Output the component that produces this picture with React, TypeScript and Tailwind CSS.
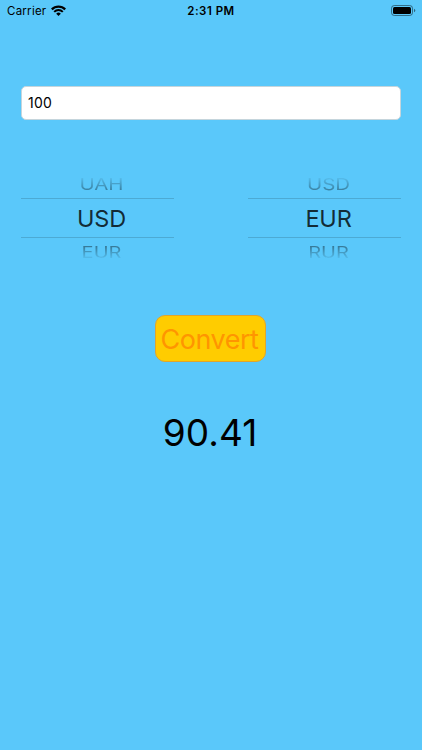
import { useState } from 'react';

interface PickerProps {
  previous: string;
  selected: string;
  next: string;
}

function StatusBar() {
  return (
    <div className="relative flex h-[22px] items-center justify-between pl-[7px] pr-[6px] text-[11.5px] leading-none">
      <div className="flex items-center gap-[5px]">
        <span className="translate-y-px tracking-[0.25px]">Carrier</span>
        <svg className="-translate-y-px" width="15" height="11" viewBox="0 0 15 11" fill="none" stroke="black">
          <path d="M0.8 4.4a9.4 9.4 0 0 1 13.4 0" strokeWidth="2.3" />
          <path d="M3.2 6.9a6 6 0 0 1 8.6 0" strokeWidth="2" />
          <path d="M7.5 11L5.2 8.8a3.2 3.2 0 0 1 4.6 0z" fill="black" stroke="none" />
        </svg>
      </div>
      <span className="absolute inset-x-0 translate-y-px text-center font-semibold tracking-[0.5px]">2:31 PM</span>
      <svg className="-translate-y-px" width="25" height="11" viewBox="0 0 25 11">
        <rect x="0.5" y="0.5" width="21" height="10" rx="2.8" fill="none" stroke="black" strokeOpacity="0.45" />
        <rect x="2" y="2" width="18" height="7" rx="1.5" />
        <path d="M23 3.7v3.6q1.3-.5 1.3-1.8t-1.3-1.8" fillOpacity="0.5" />
      </svg>
    </div>
  );
}

function Picker({ previous, selected, next }: PickerProps) {
  return (
    <div className="w-[153px] text-center">
      <div className="flex h-[32px] items-end justify-center pl-[8px] mask-t-from-25% mask-t-to-70%">
        <span className="origin-bottom translate-y-[-2px] scale-y-[0.8] text-[20.5px] leading-[28px] text-black/35">{previous}</span>
      </div>
      <div className="h-[40px] border-y border-black/15 pl-[8px] text-[23.5px] leading-[39px] tracking-[-0.2px] text-black/80">{selected}</div>
      <div className="flex h-[32px] items-start justify-center pl-[8px] mask-b-from-25% mask-b-to-70%">
        <span className="origin-top translate-y-[3.5px] scale-y-[0.8] text-[20px] leading-[28px] text-black/40">{next}</span>
      </div>
    </div>
  );
}

function App() {
  const [amount, setAmount] = useState<string>('100');
  const [result, setResult] = useState<string>('90.41');

  function convert() {
    setResult((Number(amount) * 0.9041).toFixed(2));
  }

  return (
    <div className="h-screen overflow-hidden bg-[#5ac8fa] font-['Inter',sans-serif] text-black">
      <StatusBar />
      <div className="flex flex-col items-center px-[21px] pt-16">
        <input
          className="h-[34px] w-full rounded-[5px] border border-[#c5d5dc] bg-white px-[6px] pb-[2px] text-[14px] tracking-[0.2px] outline-none"
          value={amount}
          onChange={(e) => setAmount(e.target.value)}
        />
        <div className="mt-[46px] flex w-full justify-between">
          <Picker previous="UAH" selected="USD" next="EUR" />
          <Picker previous="USD" selected="EUR" next="RUR" />
        </div>
        <button
          className="mt-[45px] mr-px h-[47px] w-[111px] rounded-[10px] border border-[#e0a52c] bg-[#ffcc00] pt-px pr-[2px] text-[27px] leading-none tracking-[-0.5px] text-[#ff9500]"
          onClick={() => convert()}
        >
          Convert
        </button>
        <p className="mt-[48px] pr-[2px] text-[37px] leading-[46px] tracking-[0.1px]">{result}</p>
      </div>
    </div>
  );
}

export default App;
